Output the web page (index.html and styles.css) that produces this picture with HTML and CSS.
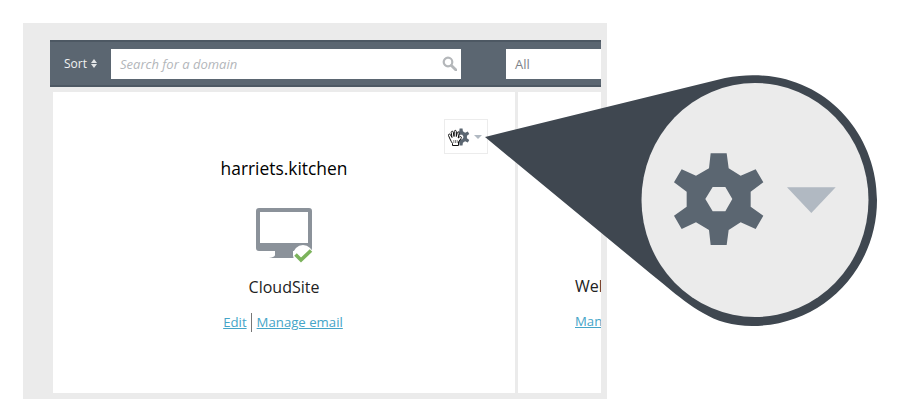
FILE: index.html
```html
<!DOCTYPE html>
<html lang="en">
<head>
<meta charset="utf-8">
<title>Domains</title>
<link rel="stylesheet" href="styles.css">
</head>
<body>
<svg class="defs" width="0" height="0" aria-hidden="true">
  <defs>
    <path id="gear" fill-rule="evenodd" d="M272 280H320L326 325L362 347L407 328L430 367L392 395V440L430 467L407 507L362 487L326 510L320 555H272L267 510L228 487L185 507L162 467L200 440V395L162 367L185 328L228 347L267 325ZM278 381L256 417L278 454H316L337 417L316 381Z"/>
  </defs>
</svg>
<main class="panel">
  <div class="toolbar">
    <button class="sort">Sort <span class="sort-arrows"><i class="up"></i><i class="down"></i></span></button>
    <div class="search">
      <span class="placeholder">Search for a domain</span>
      <svg class="search-icon" width="15" height="15" viewBox="0 0 15 15"><circle cx="6" cy="6" r="4.3" fill="none" stroke="#b4b7ba" stroke-width="2.2"/><path d="M9.4 9.4L14 14" stroke="#b4b7ba" stroke-width="2.8" stroke-linecap="round"/></svg>
    </div>
    <div class="filter">All</div>
  </div>
  <div class="cards">
    <section class="card card-main">
      <div class="gear-button">
        <svg class="gear-small" width="18" height="18" viewBox="150 270 290 295"><use href="#gear" fill="#5b6671"/></svg>
        <i class="caret"></i>
      </div>
      <h2 class="domain">harriets.kitchen</h2>
      <svg class="monitor" width="60" height="56" viewBox="0 0 60 56">
        <path fill-rule="evenodd" fill="#8b929a" d="M3 0H53Q56 0 56 3V40Q56 43 53 43H37V47Q37 49 43 50H13Q19 49 19 47V43H3Q0 43 0 40V3Q0 0 3 0ZM4 4V35H52V4Z"/>
        <circle cx="47" cy="47" r="10" fill="#fff"/>
        <path d="M39.5 46.5L45 52L55 42.5" fill="none" stroke="#7cb35c" stroke-width="3.6"/>
      </svg>
      <p class="product">CloudSite</p>
      <p class="links"><a href="#">Edit</a><span class="sep"></span><a href="#">Manage email</a></p>
    </section>
    <section class="card card-side">
      <p class="product">Welcome page</p>
      <p class="links"><a href="#">Manage email</a></p>
    </section>
  </div>
</main>
<svg class="callout" width="900" height="415" viewBox="0 0 900 415" aria-hidden="true">
  <path fill="#3f4750" d="M485 137L725 78C745 74 762 75 775 77C835 87 877 140 877 200C877 270 822 326 752 326C733 326 716 321 703 313C690 306 678 296 667 287C660 281 652 275 645 269Z"/>
  <ellipse cx="755" cy="200" rx="113.5" ry="117" fill="#ebebeb"/>
  <g transform="translate(620 60) scale(.33333)">
    <use href="#gear" fill="#5b6671"/>
    <path fill="#b1b9c2" d="M501 382H647L574 459Z"/>
  </g>
</svg>
<svg class="cursor" width="16" height="18" viewBox="0 0 16 18" aria-hidden="true">
  <path fill="#fff" stroke="#111" stroke-width="1" stroke-linejoin="round" d="M3 10L1.500 6.500C1 5 3 4.500 3.600 6L5 8.500L4.200 3.500C4 2 6 1.800 6.300 3.300L7 7.500L7.300 2.500C7.400 1 9.300 1 9.300 2.500V7.500L10.300 3.600C10.700 2.300 12.500 2.800 12.200 4.200L11.200 9L12.800 7.800C14 7 15 8.300 14 9.500L11.500 13V16.500H5.500V14.500C4.500 13 3.700 11.500 3 10Z"/>
  <path stroke="#666" stroke-width=".8" d="M6.800 11V14M8.500 11V14M10.200 11V14"/>
</svg>
</body>
</html>
```
FILE: styles.css
```css
* { box-sizing: border-box; }
html, body { margin: 0; height: 100%; }
body {
  position: relative;
  width: 900px;
  height: 415px;
  overflow: hidden;
  background: #fff;
  padding: 23px 0 0 23px;
  font-family: "Open Sans", "Liberation Sans", sans-serif;
  color: #1c1c1c;
}
.defs { position: absolute; }
.panel {
  width: 584px;
  height: 376px;
  padding: 17px 6px 6px 27px;
  background: #ebebeb;
  display: flex;
  flex-direction: column;
  gap: 5px;
}
.toolbar {
  height: 47px;
  flex: none;
  background: #5b6671;
  border-top: 2px solid #4d5863;
  border-bottom: 2px solid #4d5863;
  display: flex;
  align-items: center;
  padding-left: 14px;
  overflow: hidden;
}
.sort {
  width: 47px;
  flex: none;
  border: 0;
  padding: 0;
  background: none;
  color: #f1f2f3;
  font: 12px "Open Sans", sans-serif;
  display: flex;
  align-items: center;
  gap: 4px;
}
.sort-arrows { display: flex; flex-direction: column; gap: 1px; }
.sort-arrows i { display: block; width: 0; height: 0; border-left: 3.500px solid transparent; border-right: 3.500px solid transparent; }
.sort-arrows .up { border-bottom: 4px solid #e3e5e7; }
.sort-arrows .down { border-top: 4px solid #e3e5e7; }
.search {
  width: 350px;
  height: 30px;
  flex: none;
  background: #fff;
  display: flex;
  align-items: center;
  justify-content: space-between;
  padding: 0 4px 0 9px;
}
.placeholder {
  font-style: italic;
  font-size: 13px;
  color: #b3b6ba;
}
.filter {
  width: 120px;
  height: 30px;
  flex: none;
  margin-left: 45px;
  background: #fff;
  padding-left: 9px;
  font-size: 13px;
  line-height: 30px;
  color: #7d8289;
}
.cards {
  flex: 1;
  display: flex;
  gap: 3px;
  padding-left: 3px;
  min-height: 0;
}
.card {
  background: #fff;
  display: flex;
  flex-direction: column;
}
.card-main {
  width: 462px;
  align-items: center;
  padding-top: 27px;
}
.card-side {
  flex: 1;
  min-width: 0;
  overflow: hidden;
  padding: 183px 0 0 57px;
  white-space: nowrap;
}
.gear-button {
  align-self: flex-end;
  width: 44px;
  height: 35px;
  margin-right: 27px;
  border: 1px solid #ececec;
  display: flex;
  align-items: center;
  padding-left: 7px;
  gap: 4px;
}
.caret { width: 0; height: 0; border-left: 4px solid transparent; border-right: 4px solid transparent; border-top: 4px solid #b1b9c2; }
.domain {
  margin: 2px 0 0;
  font-size: 17.400px;
  line-height: 24px;
  font-weight: 500;
  color: #000;
}
.monitor { margin: 28px 0 0; display: block; transform: translateX(2px); }
.product { margin: 12px 0 0; font-size: 16px; line-height: 22px; color: #222; }
.card-side .product { margin: 0; }
.links { margin: 14px 0 0; padding-right: 2px; font-size: 13.200px; line-height: 20px; display: flex; align-items: center; }
.links a { color: #45a5c8; text-decoration: underline; }
.sep { width: 1px; height: 19px; background: #777; margin: 0 5px 0 4px; }
.callout { position: absolute; left: 0; top: 0; pointer-events: none; }
.cursor { position: absolute; left: 447px; top: 129px; pointer-events: none; }
```
